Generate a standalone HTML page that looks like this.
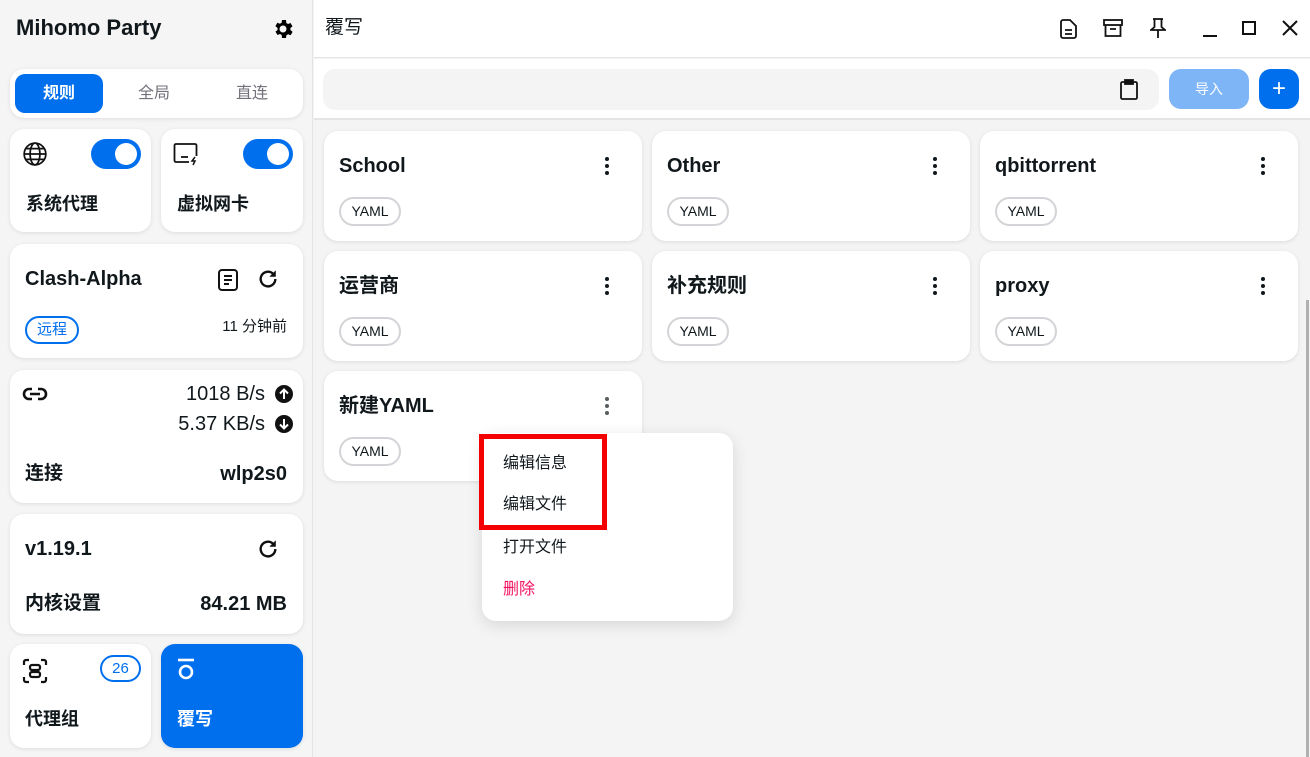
<!DOCTYPE html>
<html><head><meta charset="utf-8"><style>
*{box-sizing:border-box;margin:0;padding:0}
body{width:1310px;height:757px;overflow:hidden;background:#f4f4f5;font-family:"Liberation Sans","Noto Sans CJK SC",sans-serif;color:#11181c;position:relative;line-height:24px}
.side{position:absolute;left:0;top:0;width:313px;height:757px;background:#f5f5f5;border-right:1px solid #e4e4e7}
.card{position:absolute;background:#fff;border-radius:14px;box-shadow:0 1px 4px rgba(0,0,0,.1)}
.b{font-weight:bold}
.abs{position:absolute;white-space:nowrap}
.main{position:absolute;left:314px;top:0;right:0;bottom:0}
.hdr{position:absolute;left:0;top:0;right:0;height:58px;background:#fff;border-bottom:1px solid #e4e4e7}
.tb{position:absolute;left:0;top:59px;right:0;height:61px;background:#fff;border-bottom:2px solid #e4e4e7}
.pc{position:absolute;width:318px;height:110px;background:#fff;border-radius:14px;box-shadow:0 1px 4px rgba(0,0,0,.1)}
.pc .t{position:absolute;left:15px;top:23px;font-size:20px;font-weight:bold;line-height:24px}
.pc .tag{position:absolute;left:15px;top:66px;width:62px;height:29px;border:2px solid #d4d4d8;border-radius:15px;font-size:14px;text-align:center;line-height:25px}
.dots{position:absolute;right:33px;top:26px;width:4px}
.dots i{display:block;width:4px;height:4px;border-radius:50%;background:#11181c;margin-bottom:3px}
.tog{position:absolute;width:50px;height:30px;background:#006fee;border-radius:15px}
.tog:after{content:"";position:absolute;right:4px;top:4px;width:22px;height:22px;border-radius:50%;background:#fff}
</style></head><body>
<div class="side">
 <div class="abs b" style="left:16px;top:16px;font-size:22px;">Mihomo Party</div>
 <svg class="abs" style="left:271px;top:17px" width="24" height="24" viewBox="0 0 24 24"><path fill="#000" d="M19.4 13a7.5 7.5 0 000-2l2.1-1.6-2-3.4-2.5 1a7 7 0 00-1.7-1L15 3h-4l-.4 2.7a7 7 0 00-1.7 1l-2.5-1-2 3.4L6.6 11a7.5 7.5 0 000 2l-2.1 1.6 2 3.4 2.5-1a7 7 0 001.7 1L11 21h4l.4-2.7a7 7 0 001.7-1l2.5 1 2-3.4zM12 15.5a3.5 3.5 0 110-7 3.5 3.5 0 010 7z"/></svg>
 <div class="card" style="left:10px;top:69px;width:293px;height:49px">
  <div class="abs b" style="left:5px;top:5px;width:88px;height:39px;background:#006fee;border-radius:10px;color:#fff;font-size:16px;text-align:center;line-height:39px">规则</div>
  <div class="abs" style="left:128px;top:13px;font-size:16px;color:#71717a">全局</div>
  <div class="abs" style="left:226px;top:13px;font-size:16px;color:#71717a">直连</div>
 </div>
 <div class="card" style="left:10px;top:129px;width:141px;height:103px">
  <svg class="abs" style="left:12px;top:12px" width="26" height="26" viewBox="0 0 24 24" fill="none" stroke="#111" stroke-width="1.6"><circle cx="12" cy="12" r="10"/><ellipse cx="12" cy="12" rx="4.5" ry="10"/><path d="M2 12h20M3.5 7h17M3.5 17h17"/></svg>
  <div class="tog" style="left:81px;top:10px"></div>
  <div class="abs b" style="left:16px;top:63px;font-size:18px">系统代理</div>
 </div>
 <div class="card" style="left:161px;top:129px;width:142px;height:103px">
  <svg class="abs" style="left:12px;top:13px" width="26" height="24" viewBox="0 0 26 24" fill="none" stroke="#111" stroke-width="1.8"><path d="M16 20H3a1.5 1.5 0 01-1.5-1.5v-15A1.5 1.5 0 013 2h19a1.5 1.5 0 011.5 1.5V14"/><path d="M8 15h7"/><path d="M22 15l-3 4h3l-2 4" stroke-width="1.5"/></svg>
  <div class="tog" style="left:82px;top:10px"></div>
  <div class="abs b" style="left:16px;top:63px;font-size:18px">虚拟网卡</div>
 </div>
 <div class="card" style="left:10px;top:244px;width:293px;height:114px">
  <div class="abs b" style="left:15px;top:23px;font-size:20px">Clash-Alpha</div>
  <svg class="abs" style="left:207px;top:24px" width="22" height="24" viewBox="0 0 22 24" fill="none" stroke="#111" stroke-width="2"><rect x="2" y="2" width="18" height="20" rx="3"/><path d="M7 8h8M7 12h8M7 16h5"/></svg>
  <svg class="abs" style="left:247px;top:24px" width="22" height="22" viewBox="0 0 24 24" fill="none" stroke="#111" stroke-width="2.6"><path d="M20 12a8 8 0 11-2.5-5.8"/><path d="M20 3v6h-6" fill="#111" stroke-width="1"/></svg>
  <div class="abs" style="left:15px;top:72px;width:54px;height:28px;border:2px solid #006fee;border-radius:14px;color:#006fee;font-size:15px;text-align:center;line-height:24px">远程</div>
  <div class="abs" style="right:16px;top:71px;font-size:15px">11 分钟前</div>
 </div>
 <div class="card" style="left:10px;top:370px;width:293px;height:133px">
  <svg class="abs" style="left:12px;top:17px" width="26" height="14" viewBox="0 0 26 14" fill="none" stroke="#111" stroke-width="2.6"><path d="M10 2H7a5 5 0 000 10h3M16 2h3a5 5 0 010 10h-3M8 7h10"/></svg>
  <div class="abs" style="right:38px;top:12px;font-size:20px">1018 B/s</div>
  <div class="abs" style="right:38px;top:42px;font-size:20px">5.37 KB/s</div>
  <svg class="abs" style="left:265px;top:15px" width="18" height="18" viewBox="0 0 18 18"><circle cx="9" cy="9" r="9" fill="#111"/><path d="M9 14V5M5 8.5L9 4.5l4 4" stroke="#fff" stroke-width="2" fill="none"/></svg>
  <svg class="abs" style="left:265px;top:45px" width="18" height="18" viewBox="0 0 18 18"><circle cx="9" cy="9" r="9" fill="#111"/><path d="M9 4v9M5 9.5l4 4 4-4" stroke="#fff" stroke-width="2" fill="none"/></svg>
  <div class="abs b" style="left:15px;top:92px;font-size:19px">连接</div>
  <div class="abs b" style="right:16px;top:92px;font-size:20px">wlp2s0</div>
 </div>
 <div class="card" style="left:10px;top:514px;width:293px;height:120px">
  <div class="abs b" style="left:15px;top:23px;font-size:20px">v1.19.1</div>
  <svg class="abs" style="left:247px;top:24px" width="22" height="22" viewBox="0 0 24 24" fill="none" stroke="#111" stroke-width="2.6"><path d="M20 12a8 8 0 11-2.5-5.8"/><path d="M20 3v6h-6" fill="#111" stroke-width="1"/></svg>
  <div class="abs b" style="left:15px;top:78px;font-size:19px">内核设置</div>
  <div class="abs b" style="right:16px;top:78px;font-size:20px">84.21 MB</div>
 </div>
 <div class="card" style="left:10px;top:644px;width:141px;height:104px">
  <svg class="abs" style="left:12px;top:14px" width="26" height="26" viewBox="0 0 26 26" fill="none" stroke="#111" stroke-width="2.2"><path d="M2 7V4a2 2 0 012-2h3M19 2h3a2 2 0 012 2v3M24 19v3a2 2 0 01-2 2h-3M7 24H4a2 2 0 01-2-2v-3"/><rect x="8" y="7" width="10" height="5" rx="2"/><rect x="8" y="14" width="10" height="5" rx="2"/></svg>
  <div class="abs" style="left:90px;top:11px;width:41px;height:27px;border:2px solid #006fee;border-radius:14px;color:#006fee;font-size:15px;text-align:center;line-height:23px">26</div>
  <div class="abs b" style="left:15px;top:63px;font-size:18px">代理组</div>
 </div>
 <div class="card" style="left:161px;top:644px;width:142px;height:104px;background:#006fee">
  <svg class="abs" style="left:15px;top:14px" width="20" height="22" viewBox="0 0 20 22" fill="none" stroke="#fff" stroke-width="2.6"><path d="M2 2h16"/><circle cx="10" cy="14" r="6"/></svg>
  <div class="abs b" style="left:16px;top:63px;font-size:18px;color:#fff">覆写</div>
 </div>
</div>
<div class="main">
 <div class="hdr">
  <div class="abs" style="left:11px;top:16px;font-size:19px">覆写</div>
  <svg class="abs" style="left:746px;top:19px" width="18" height="20" viewBox="0 0 18 20" fill="none" stroke="#111" stroke-width="1.8"><path d="M3 1h7l6 6v10a2 2 0 01-2 2H3a2 2 0 01-2-2V3a2 2 0 012-2z"/><path d="M5 11h7M5 15h7"/></svg>
  <svg class="abs" style="left:789px;top:19px" width="20" height="18" viewBox="0 0 20 18" fill="none" stroke="#111" stroke-width="1.8"><rect x="1" y="1" width="18" height="5"/><path d="M2.5 6v11h15V6M7 10h6"/></svg>
  <svg class="abs" style="left:836px;top:18px" width="16" height="20" viewBox="0 0 16 20" fill="none" stroke="#111" stroke-width="1.8"><path d="M3 1h10M4.5 1v8L1 12h14l-3.5-3V1M8 12v8"/></svg>
  <div class="abs" style="left:889px;top:35px;width:14px;height:2px;background:#111"></div>
  <div class="abs" style="left:928px;top:21px;width:14px;height:14px;border:2px solid #111"></div>
  <svg class="abs" style="left:968px;top:20px" width="16" height="16" viewBox="0 0 16 16" stroke="#111" stroke-width="2"><path d="M1 1l14 14M15 1L1 15"/></svg>
 </div>
 <div class="tb">
  <div class="abs" style="left:9px;top:10px;width:836px;height:41px;background:#f4f4f5;border-radius:12px"></div>
  <svg class="abs" style="left:805px;top:20px" width="20" height="21" viewBox="0 0 20 21" fill="none" stroke="#111" stroke-width="1.8"><rect x="2" y="3" width="16" height="17" rx="1.5"/><rect x="6" y="1" width="8" height="4" fill="#111"/></svg>
  <div class="abs" style="left:855px;top:10px;width:80px;height:40px;background:#7eb5f6;border-radius:12px;color:#fff;font-size:14px;text-align:center;line-height:40px">导入</div>
  <div class="abs" style="left:945px;top:10px;width:40px;height:40px;background:#006fee;border-radius:12px;color:#fff;font-size:24px;text-align:center;line-height:40px">+</div>
 </div>
 <div class="pc" style="left:10px;top:131px"><div class="t">School</div><div class="dots"><i></i><i></i><i></i></div><div class="tag">YAML</div></div>
 <div class="pc" style="left:338px;top:131px"><div class="t">Other</div><div class="dots"><i></i><i></i><i></i></div><div class="tag">YAML</div></div>
 <div class="pc" style="left:666px;top:131px"><div class="t">qbittorrent</div><div class="dots"><i></i><i></i><i></i></div><div class="tag">YAML</div></div>
 <div class="pc" style="left:10px;top:251px"><div class="t">运营商</div><div class="dots"><i></i><i></i><i></i></div><div class="tag">YAML</div></div>
 <div class="pc" style="left:338px;top:251px"><div class="t">补充规则</div><div class="dots"><i></i><i></i><i></i></div><div class="tag">YAML</div></div>
 <div class="pc" style="left:666px;top:251px"><div class="t">proxy</div><div class="dots"><i></i><i></i><i></i></div><div class="tag">YAML</div></div>
 <div class="pc" style="left:10px;top:371px"><div class="t">新建YAML</div><div class="dots" style="opacity:.7"><i></i><i></i><i></i></div><div class="tag">YAML</div></div>
 <div class="abs" style="left:168px;top:433px;width:251px;height:188px;background:#fff;border-radius:14px;box-shadow:0 4px 16px rgba(0,0,0,.12)">
  <div class="abs" style="left:21px;top:19px;font-size:16px">编辑信息</div>
  <div class="abs" style="left:21px;top:60px;font-size:16px">编辑文件</div>
  <div class="abs" style="left:21px;top:103px;font-size:16px">打开文件</div>
  <div class="abs" style="left:21px;top:145px;font-size:16px;color:#f31260">删除</div>
 </div>
 <div class="abs" style="left:165px;top:434px;width:128px;height:96px;border:5px solid #f50000"></div>
 <div class="abs" style="left:992px;top:300px;width:3px;height:457px;background:#b0b0b0"></div>
</div>
</body></html>
